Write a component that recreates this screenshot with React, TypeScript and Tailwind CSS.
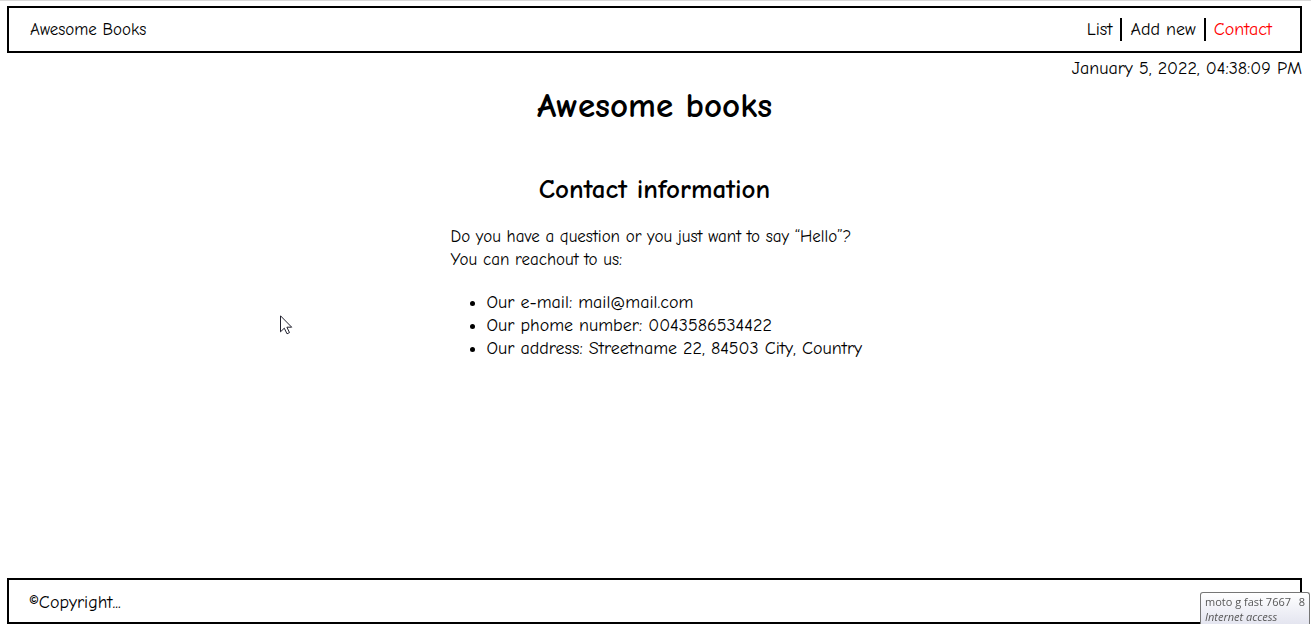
const links = [
  { label: 'List', href: '#list', style: 'text-black' },
  { label: 'Add new', href: '#add', style: 'border-l-2 border-black text-black' },
  { label: 'Contact', href: '#contact', style: 'border-l-2 border-black text-[#ff0000]' },
];

function Header() {
  return (
    <header className="flex items-center justify-between border-2 border-black py-[10px] pr-5 pl-[21px]">
      <a href="#home" className="text-[17px]">Awesome Books</a>
      <nav className="flex">
        {links.map((link) => (
          <a key={link.label} href={link.href} className={`px-2 ${link.style}`}>
            {link.label}
          </a>
        ))}
      </nav>
    </header>
  );
}

function ContactInfo() {
  return (
    <section className="flex flex-col items-center">
      <h2 className="text-[27px] leading-[34px] font-bold">Contact information</h2>
      <div className="mt-[18px] w-[408px]">
        <p className="text-[17px] whitespace-nowrap">
          Do you have a question or you just want to say “Hello”?
          <br />
          You can reachout to us:
        </p>
        <ul className="mt-5 list-disc pl-9 whitespace-nowrap">
          <li>Our e-mail: mail@mail.com</li>
          <li>Our phome number: 0043586534422</li>
          <li>Our address: Streetname 22, 84503 City, Country</li>
        </ul>
      </div>
    </section>
  );
}

function NetworkTooltip() {
  return (
    <div
      role="tooltip"
      className="fixed right-px bottom-0 w-[110px] rounded-t-[3px] border border-b-0 border-[#767676] bg-linear-to-b from-white to-[#e4e5f0] pt-px pr-1 pl-1 font-['Open_Sans',sans-serif] text-[11px] leading-[15px] whitespace-nowrap text-[#575757]"
    >
      <p className="flex justify-between">
        <span>moto g fast 7667</span>
        <span>8</span>
      </p>
      <p className="italic">Internet access</p>
    </div>
  );
}

function Cursor() {
  return (
    <svg className="pointer-events-none absolute top-[315px] left-[280px]" width="13" height="20" viewBox="0 0 13 20" aria-hidden="true">
      <path d="M.5.8v16l3.8-3.6 2.7 5.6 2.5-1.2-2.6-5.4h4.8Z" fill="#fff" stroke="#20202e" strokeWidth="1" />
    </svg>
  );
}

export default function App() {
  return (
    <div className="flex min-h-screen flex-col border-t border-[#d9d9d9] bg-white pt-[5px] pr-[9px] pl-[7px] font-['Comic_Sans_MS','Comic_Neue','Open_Sans',sans-serif] text-[18px] leading-[23px] text-black">
      <Header />
      <main className="flex grow flex-col">
        <time className="mt-1 self-end" dateTime="2022-01-05T16:38:09">January 5, 2022, 04:38:09 PM</time>
        <h1 className="mt-[3px] mb-[45px] text-center text-[35px] leading-[45px] font-bold">Awesome books</h1>
        <ContactInfo />
      </main>
      <footer className="border-2 border-black pt-[11px] pb-2 pl-5">©Copyright...</footer>
      <Cursor />
      <NetworkTooltip />
    </div>
  );
}
